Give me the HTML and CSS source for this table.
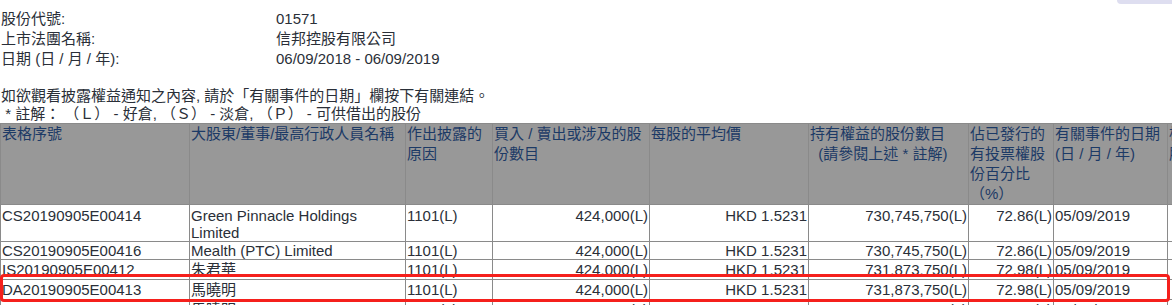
FILE: index.html
```html
<!DOCTYPE html>
<html lang="zh-Hant">
<head>
<meta charset="utf-8">
<title>披露權益</title>
<link rel="stylesheet" href="styles.css">
</head>
<body>
<div class="corner"></div>
<div class="info">
  <div class="label">股份代號:</div><div class="value">01571</div>
  <div class="label">上市法團名稱:</div><div class="value">信邦控股有限公司</div>
  <div class="label">日期 (日 / 月 / 年):</div><div class="value">06/09/2018 - 06/09/2019</div>
</div>
<div class="notes">
  <div class="note">如欲觀看披露權益通知之內容, 請於「有關事件的日期」欄按下有關連結。</div>
  <div class="note">&nbsp;* 註解： （Ｌ） - 好倉, （Ｓ） - 淡倉, （Ｐ） - 可供借出的股份</div>
</div>
<div class="table-wrap">
  <table class="grid">
    <colgroup>
      <col class="c1"><col class="c2"><col class="c3"><col class="c4"><col class="c5"><col class="c6"><col class="c7"><col class="c8"><col class="c9">
    </colgroup>
    <thead>
      <tr>
        <th>表格序號</th>
        <th>大股東/董事/最高行政人員名稱</th>
        <th>作出披露的原因</th>
        <th>買入 / 賣出或涉及的股份數目</th>
        <th>每股的平均價</th>
        <th>持有權益的股份數目<br>&nbsp;&nbsp;(請參閱上述 * 註解)</th>
        <th>佔已發行的有投票權股份百分比（%）</th>
        <th>有關事件的日期 (日 / 月 / 年)</th>
        <th>權益性質相關股份</th>
      </tr>
    </thead>
    <tbody>
      <tr class="tall">
        <td>CS20190905E00414</td>
        <td>Green Pinnacle Holdings Limited</td>
        <td>1101(L)</td>
        <td class="num">424,000(L)</td>
        <td class="num">HKD 1.5231</td>
        <td class="num">730,745,750(L)</td>
        <td class="num">72.86(L)</td>
        <td>05/09/2019</td>
        <td></td>
      </tr>
      <tr>
        <td>CS20190905E00416</td>
        <td>Mealth (PTC) Limited</td>
        <td>1101(L)</td>
        <td class="num">424,000(L)</td>
        <td class="num">HKD 1.5231</td>
        <td class="num">730,745,750(L)</td>
        <td class="num">72.86(L)</td>
        <td>05/09/2019</td>
        <td></td>
      </tr>
      <tr class="cjk">
        <td>IS20190905E00412</td>
        <td>朱君華</td>
        <td>1101(L)</td>
        <td class="num">424,000(L)</td>
        <td class="num">HKD 1.5231</td>
        <td class="num">731,873,750(L)</td>
        <td class="num">72.98(L)</td>
        <td>05/09/2019</td>
        <td></td>
      </tr>
      <tr class="cjk">
        <td>DA20190905E00413</td>
        <td>馬曉明</td>
        <td>1101(L)</td>
        <td class="num">424,000(L)</td>
        <td class="num">HKD 1.5231</td>
        <td class="num">731,873,750(L)</td>
        <td class="num">72.98(L)</td>
        <td>05/09/2019</td>
        <td></td>
      </tr>
      <tr class="cjk">
        <td>DA20190903E00418</td>
        <td>馬曉明</td>
        <td>1101(L)</td>
        <td class="num">10,000(L)</td>
        <td class="num">HKD 1.5700</td>
        <td class="num">115,000(L)</td>
        <td class="num">0.01(L)</td>
        <td>03/09/2019</td>
        <td></td>
      </tr>
    </tbody>
  </table>
  <div class="highlight"></div>
</div>
</body>
</html>
```
FILE: styles.css
```css
html, body {
  margin: 0;
  padding: 0;
  overflow: hidden;
  background: #ffffff;
}

body {
  font-family: "Liberation Sans", Arial, "Noto Sans CJK TC", sans-serif;
  font-size: 15px;
  color: #2a2f38;
  padding-top: 9px;
  width: 1400px;
}

.corner {
  position: absolute;
  top: 0;
  left: 1117px;
  width: 55px;
  height: 4px;
  background: #dedef0;
  border-bottom-left-radius: 5px;
}

.info {
  display: grid;
  grid-template-columns: 275px 400px;
  line-height: 20px;
  padding-left: 1px;
}

.notes {
  margin-top: 18px;
  padding-left: 1px;
  line-height: 18px;
}

.table-wrap {
  position: relative;
  width: 1172px;
}

.grid {
  border-collapse: collapse;
  table-layout: fixed;
  width: 1267px;
}

.c1 { width: 189px; }
.c2 { width: 216px; }
.c3 { width: 87px; }
.c4 { width: 157px; }
.c5 { width: 159px; }
.c6 { width: 160px; }
.c7 { width: 85px; }
.c8 { width: 114px; }
.c9 { width: 100px; }

.grid th,
.grid td {
  border: 1px solid #8a8a8a;
  padding: 0 1px;
  vertical-align: top;
  font-weight: normal;
  text-align: left;
}

.grid th {
  background: #989898;
  color: #1c3a66;
  line-height: 20px;
  height: 80px;
  padding-top: 0;
}

.grid td {
  line-height: 17px;
  color: #2a2f38;
}

.grid tr.tall td {
  padding-top: 2px;
}

.grid tr.cjk td {
  line-height: 19px;
}

.grid td.num {
  text-align: right;
}

.highlight {
  position: absolute;
  left: 0;
  top: 151px;
  width: 1164px;
  height: 22px;
  border: 3px solid #f5201c;
  border-radius: 4px;
  pointer-events: none;
}
```
